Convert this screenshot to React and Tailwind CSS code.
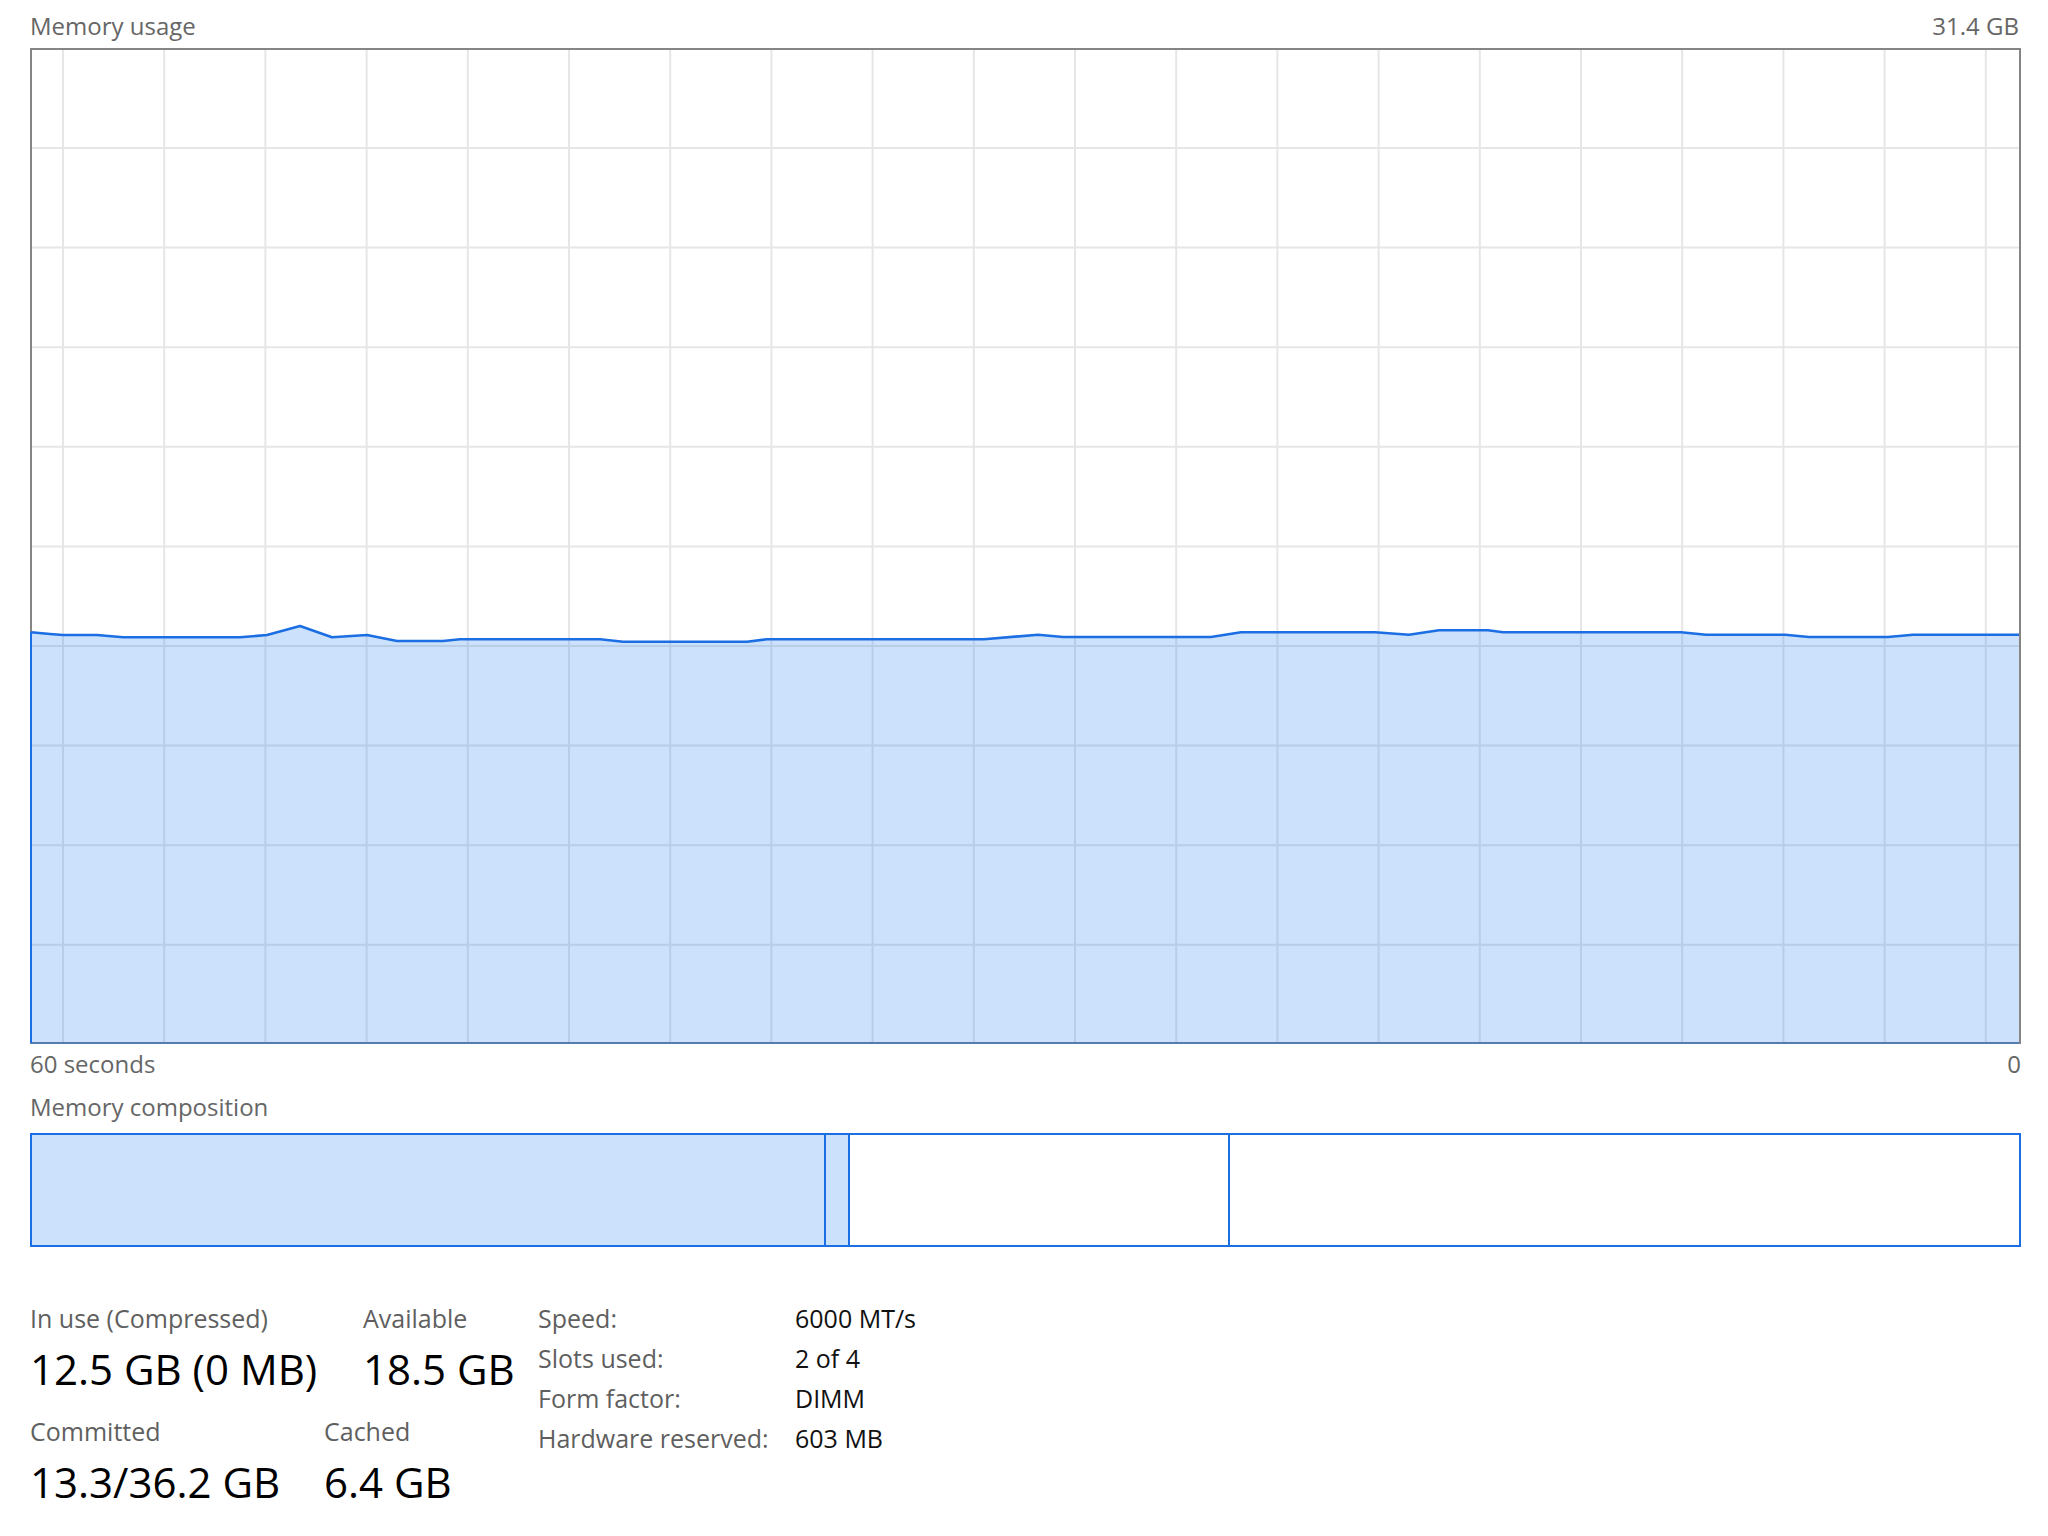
import React from "react";

const PTS = [
  [31, 632.3], [50, 634], [63, 635], [97, 635], [123, 637.3], [240, 637.3], [267, 635],
  [300, 626], [332, 637.3], [367, 635], [397, 641], [443, 641], [460, 639.3], [600, 639.3],
  [623, 641.7], [747, 641.7], [767, 639.3], [984, 639.3], [1038, 634.7], [1063, 637],
  [1211, 637], [1241, 632.3], [1375, 632.3], [1409, 634.7], [1439, 630.3], [1488, 630.3],
  [1503, 632.3], [1681, 632.3], [1706, 634.7], [1785, 634.7], [1809, 637], [1888, 637],
  [1913, 634.7], [2019, 634.7],
];

function Chart() {
  const vLines = Array.from({ length: 20 }, (_, k) => 63 + 101.2 * k);
  const hLines = Array.from({ length: 9 }, (_, k) => 148 + 99.6 * k);
  const line = PTS.map((p) => p.join(",")).join(" ");
  const fill = `${line} 2019,1042 31,1042`;
  return (
    <svg
      className="absolute inset-0 overflow-visible"
      width="1987"
      height="992"
      viewBox="32 50 1987 992"
      preserveAspectRatio="none"
    >
      {vLines.map((x) => (
        <line key={"v" + x} x1={x} y1={50} x2={x} y2={1042} stroke="#e6e6e6" strokeWidth="2" />
      ))}
      {hLines.map((y) => (
        <line key={"h" + y} x1={32} y1={y} x2={2019} y2={y} stroke="#e6e6e6" strokeWidth="2" />
      ))}
      <polygon points={fill} fill="rgba(0,110,240,0.2)" />
      <polyline points={line} fill="none" stroke="#1c6ee3" strokeWidth="2.6" strokeLinejoin="round" />
      <line x1={31} y1={632.3} x2={31} y2={1043} stroke="#1c6ee3" strokeWidth="2" />
      <line x1={31} y1={1043} x2={2019} y2={1043} stroke="#1c6ee3" strokeWidth="2" strokeOpacity="0.45" />
    </svg>
  );
}

export default function App() {
  return (
    <div className="w-[2048px] h-[1536px] overflow-hidden bg-white pl-[30px] pt-[11px] font-['Open_Sans',sans-serif]">
      <div className="w-[1991px] flex flex-col">
        <div className="flex justify-between text-[24px] leading-[30px] text-[#666666]">
          <span>Memory usage</span>
          <span className="pr-[2px]">31.4 GB</span>
        </div>
        <div className="relative mt-[7px] h-[996px] border-2 border-[#858585]">
          <Chart />
        </div>
        <div className="flex justify-between mt-[5px] text-[24px] leading-[30px] text-[#666666]">
          <span>60 seconds</span>
          <span>0</span>
        </div>
        <div className="mt-[13px] text-[24px] leading-[30px] text-[#666666]">Memory composition</div>
        <div className="mt-[11px] h-[114px] flex border-2 border-[#1c6ee3]">
          <div className="w-[794px] bg-[#cce2fc] border-r-2 border-[#1c6ee3]"></div>
          <div className="w-[24px] bg-[#cce2fc] border-r-2 border-[#1c6ee3]"></div>
          <div className="w-[380px] bg-white border-r-2 border-[#1c6ee3]"></div>
          <div className="flex-1 bg-white"></div>
        </div>

        <div className="mt-[51px] flex">
          <div className="w-[508px] flex flex-col">
            <div className="flex">
              <div className="w-[333px] flex flex-col">
                <span className="text-[25px] leading-[40px] text-[#5f5f5f]">In use (Compressed)</span>
                <span className="mt-[6px] text-[42px] leading-[50px] text-black">12.5 GB (0 MB)</span>
              </div>
              <div className="flex flex-col">
                <span className="text-[25px] leading-[40px] text-[#5f5f5f]">Available</span>
                <span className="mt-[6px] text-[42px] leading-[50px] text-black">18.5 GB</span>
              </div>
            </div>
            <div className="flex mt-[17px]">
              <div className="w-[294px] flex flex-col">
                <span className="text-[25px] leading-[40px] text-[#5f5f5f]">Committed</span>
                <span className="mt-[6px] text-[42px] leading-[50px] text-black">13.3/36.2 GB</span>
              </div>
              <div className="flex flex-col">
                <span className="text-[25px] leading-[40px] text-[#5f5f5f]">Cached</span>
                <span className="mt-[6px] text-[42px] leading-[50px] text-black">6.4 GB</span>
              </div>
            </div>
            <div className="flex mt-[20px] text-[25px] leading-[40px] text-[#5f5f5f]">
              <span className="w-[195px]">Paged pool</span>
              <span>Non-paged pool</span>
            </div>
          </div>
          <div className="grid grid-cols-[257px_auto] content-start text-[25px] leading-[40px]">
            <span className="text-[#5f5f5f]">Speed:</span>
            <span className="text-[#111111]">6000 MT/s</span>
            <span className="text-[#5f5f5f]">Slots used:</span>
            <span className="text-[#111111]">2 of 4</span>
            <span className="text-[#5f5f5f]">Form factor:</span>
            <span className="text-[#111111]">DIMM</span>
            <span className="text-[#5f5f5f]">Hardware reserved:</span>
            <span className="text-[#111111]">603 MB</span>
          </div>
        </div>
      </div>
    </div>
  );
}
